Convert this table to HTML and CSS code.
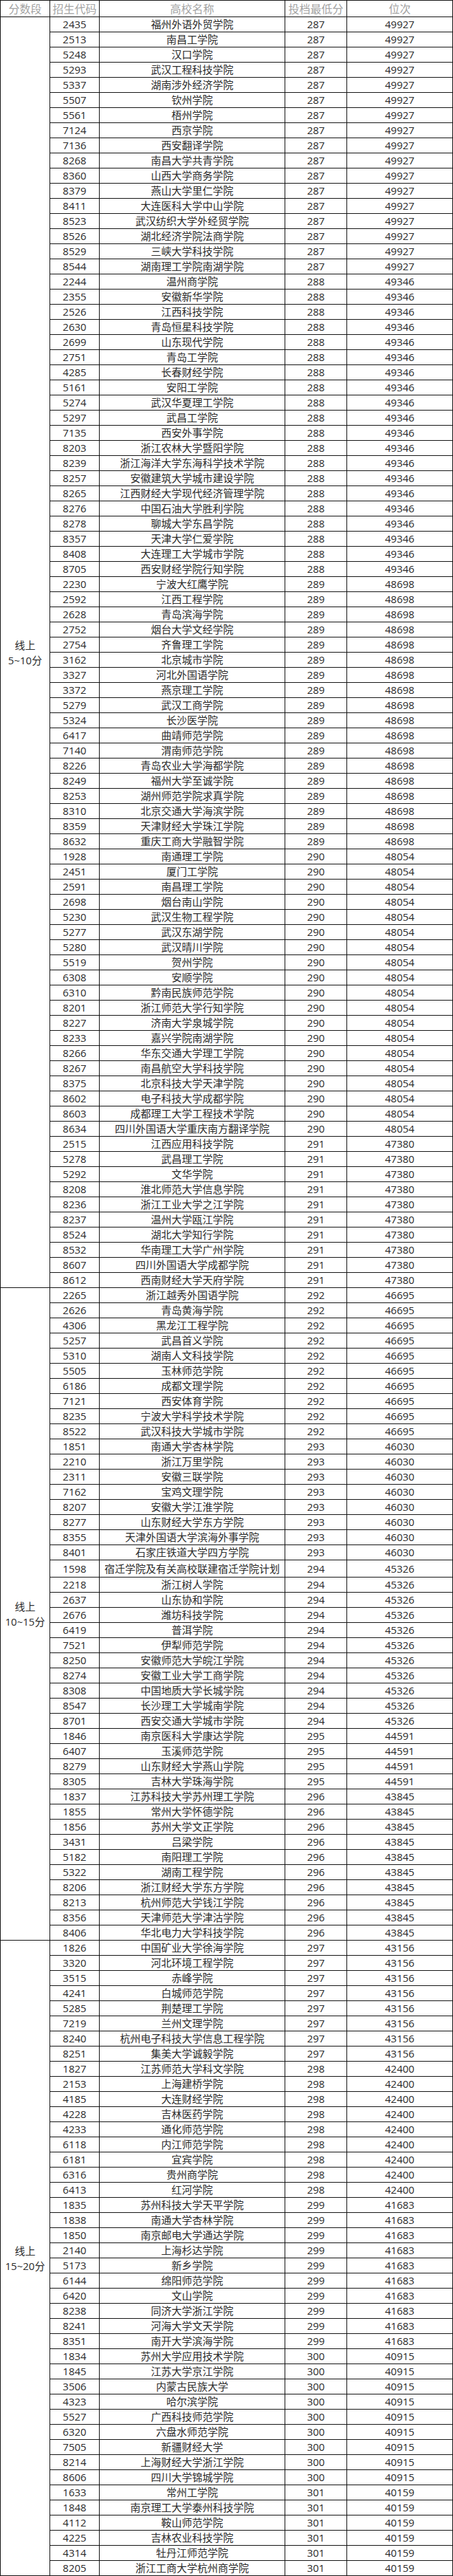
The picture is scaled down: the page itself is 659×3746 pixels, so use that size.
FILE: index.html
```html
<!DOCTYPE html>
<html lang="zh-CN">
<head>
<meta charset="utf-8">
<title>投档线</title>
<link rel="stylesheet" href="styles.css">
</head>
<body>
<div class="tbl">
  <div class="head">
    <div class="hc">分数段</div><div class="hc">招生代码</div><div class="hc">高校名称</div><div class="hc">投档最低分</div><div class="hc">位次</div>
  </div>

  <div class="group">
    <div class="label">线上<br>5~10分</div>
    <div class="rows">
      <div class="row"><span>2435</span><span>福州外语外贸学院</span><span>287</span><span>49927</span></div>
      <div class="row"><span>2513</span><span>南昌工学院</span><span>287</span><span>49927</span></div>
      <div class="row"><span>5248</span><span>汉口学院</span><span>287</span><span>49927</span></div>
      <div class="row"><span>5293</span><span>武汉工程科技学院</span><span>287</span><span>49927</span></div>
      <div class="row"><span>5337</span><span>湖南涉外经济学院</span><span>287</span><span>49927</span></div>
      <div class="row"><span>5507</span><span>钦州学院</span><span>287</span><span>49927</span></div>
      <div class="row"><span>5561</span><span>梧州学院</span><span>287</span><span>49927</span></div>
      <div class="row"><span>7124</span><span>西京学院</span><span>287</span><span>49927</span></div>
      <div class="row"><span>7136</span><span>西安翻译学院</span><span>287</span><span>49927</span></div>
      <div class="row"><span>8268</span><span>南昌大学共青学院</span><span>287</span><span>49927</span></div>
      <div class="row"><span>8360</span><span>山西大学商务学院</span><span>287</span><span>49927</span></div>
      <div class="row"><span>8379</span><span>燕山大学里仁学院</span><span>287</span><span>49927</span></div>
      <div class="row"><span>8411</span><span>大连医科大学中山学院</span><span>287</span><span>49927</span></div>
      <div class="row"><span>8523</span><span>武汉纺织大学外经贸学院</span><span>287</span><span>49927</span></div>
      <div class="row"><span>8526</span><span>湖北经济学院法商学院</span><span>287</span><span>49927</span></div>
      <div class="row"><span>8529</span><span>三峡大学科技学院</span><span>287</span><span>49927</span></div>
      <div class="row"><span>8544</span><span>湖南理工学院南湖学院</span><span>287</span><span>49927</span></div>
      <div class="row"><span>2244</span><span>温州商学院</span><span>288</span><span>49346</span></div>
      <div class="row"><span>2355</span><span>安徽新华学院</span><span>288</span><span>49346</span></div>
      <div class="row"><span>2526</span><span>江西科技学院</span><span>288</span><span>49346</span></div>
      <div class="row"><span>2630</span><span>青岛恒星科技学院</span><span>288</span><span>49346</span></div>
      <div class="row"><span>2699</span><span>山东现代学院</span><span>288</span><span>49346</span></div>
      <div class="row"><span>2751</span><span>青岛工学院</span><span>288</span><span>49346</span></div>
      <div class="row"><span>4285</span><span>长春财经学院</span><span>288</span><span>49346</span></div>
      <div class="row"><span>5161</span><span>安阳工学院</span><span>288</span><span>49346</span></div>
      <div class="row"><span>5274</span><span>武汉华夏理工学院</span><span>288</span><span>49346</span></div>
      <div class="row"><span>5297</span><span>武昌工学院</span><span>288</span><span>49346</span></div>
      <div class="row"><span>7135</span><span>西安外事学院</span><span>288</span><span>49346</span></div>
      <div class="row"><span>8203</span><span>浙江农林大学暨阳学院</span><span>288</span><span>49346</span></div>
      <div class="row"><span>8239</span><span>浙江海洋大学东海科学技术学院</span><span>288</span><span>49346</span></div>
      <div class="row"><span>8257</span><span>安徽建筑大学城市建设学院</span><span>288</span><span>49346</span></div>
      <div class="row"><span>8265</span><span>江西财经大学现代经济管理学院</span><span>288</span><span>49346</span></div>
      <div class="row"><span>8276</span><span>中国石油大学胜利学院</span><span>288</span><span>49346</span></div>
      <div class="row"><span>8278</span><span>聊城大学东昌学院</span><span>288</span><span>49346</span></div>
      <div class="row"><span>8357</span><span>天津大学仁爱学院</span><span>288</span><span>49346</span></div>
      <div class="row"><span>8408</span><span>大连理工大学城市学院</span><span>288</span><span>49346</span></div>
      <div class="row"><span>8705</span><span>西安财经学院行知学院</span><span>288</span><span>49346</span></div>
      <div class="row"><span>2230</span><span>宁波大红鹰学院</span><span>289</span><span>48698</span></div>
      <div class="row"><span>2592</span><span>江西工程学院</span><span>289</span><span>48698</span></div>
      <div class="row"><span>2628</span><span>青岛滨海学院</span><span>289</span><span>48698</span></div>
      <div class="row"><span>2752</span><span>烟台大学文经学院</span><span>289</span><span>48698</span></div>
      <div class="row"><span>2754</span><span>齐鲁理工学院</span><span>289</span><span>48698</span></div>
      <div class="row"><span>3162</span><span>北京城市学院</span><span>289</span><span>48698</span></div>
      <div class="row"><span>3327</span><span>河北外国语学院</span><span>289</span><span>48698</span></div>
      <div class="row"><span>3372</span><span>燕京理工学院</span><span>289</span><span>48698</span></div>
      <div class="row"><span>5279</span><span>武汉工商学院</span><span>289</span><span>48698</span></div>
      <div class="row"><span>5324</span><span>长沙医学院</span><span>289</span><span>48698</span></div>
      <div class="row"><span>6417</span><span>曲靖师范学院</span><span>289</span><span>48698</span></div>
      <div class="row"><span>7140</span><span>渭南师范学院</span><span>289</span><span>48698</span></div>
      <div class="row"><span>8226</span><span>青岛农业大学海都学院</span><span>289</span><span>48698</span></div>
      <div class="row"><span>8249</span><span>福州大学至诚学院</span><span>289</span><span>48698</span></div>
      <div class="row"><span>8253</span><span>湖州师范学院求真学院</span><span>289</span><span>48698</span></div>
      <div class="row"><span>8310</span><span>北京交通大学海滨学院</span><span>289</span><span>48698</span></div>
      <div class="row"><span>8359</span><span>天津财经大学珠江学院</span><span>289</span><span>48698</span></div>
      <div class="row"><span>8632</span><span>重庆工商大学融智学院</span><span>289</span><span>48698</span></div>
      <div class="row"><span>1928</span><span>南通理工学院</span><span>290</span><span>48054</span></div>
      <div class="row"><span>2451</span><span>厦门工学院</span><span>290</span><span>48054</span></div>
      <div class="row"><span>2591</span><span>南昌理工学院</span><span>290</span><span>48054</span></div>
      <div class="row"><span>2698</span><span>烟台南山学院</span><span>290</span><span>48054</span></div>
      <div class="row"><span>5230</span><span>武汉生物工程学院</span><span>290</span><span>48054</span></div>
      <div class="row"><span>5277</span><span>武汉东湖学院</span><span>290</span><span>48054</span></div>
      <div class="row"><span>5280</span><span>武汉晴川学院</span><span>290</span><span>48054</span></div>
      <div class="row"><span>5519</span><span>贺州学院</span><span>290</span><span>48054</span></div>
      <div class="row"><span>6308</span><span>安顺学院</span><span>290</span><span>48054</span></div>
      <div class="row"><span>6310</span><span>黔南民族师范学院</span><span>290</span><span>48054</span></div>
      <div class="row"><span>8201</span><span>浙江师范大学行知学院</span><span>290</span><span>48054</span></div>
      <div class="row"><span>8227</span><span>济南大学泉城学院</span><span>290</span><span>48054</span></div>
      <div class="row"><span>8233</span><span>嘉兴学院南湖学院</span><span>290</span><span>48054</span></div>
      <div class="row"><span>8266</span><span>华东交通大学理工学院</span><span>290</span><span>48054</span></div>
      <div class="row"><span>8267</span><span>南昌航空大学科技学院</span><span>290</span><span>48054</span></div>
      <div class="row"><span>8375</span><span>北京科技大学天津学院</span><span>290</span><span>48054</span></div>
      <div class="row"><span>8602</span><span>电子科技大学成都学院</span><span>290</span><span>48054</span></div>
      <div class="row"><span>8603</span><span>成都理工大学工程技术学院</span><span>290</span><span>48054</span></div>
      <div class="row"><span>8634</span><span>四川外国语大学重庆南方翻译学院</span><span>290</span><span>48054</span></div>
      <div class="row"><span>2515</span><span>江西应用科技学院</span><span>291</span><span>47380</span></div>
      <div class="row"><span>5278</span><span>武昌理工学院</span><span>291</span><span>47380</span></div>
      <div class="row"><span>5292</span><span>文华学院</span><span>291</span><span>47380</span></div>
      <div class="row"><span>8208</span><span>淮北师范大学信息学院</span><span>291</span><span>47380</span></div>
      <div class="row"><span>8236</span><span>浙江工业大学之江学院</span><span>291</span><span>47380</span></div>
      <div class="row"><span>8237</span><span>温州大学瓯江学院</span><span>291</span><span>47380</span></div>
      <div class="row"><span>8524</span><span>湖北大学知行学院</span><span>291</span><span>47380</span></div>
      <div class="row"><span>8532</span><span>华南理工大学广州学院</span><span>291</span><span>47380</span></div>
      <div class="row"><span>8607</span><span>四川外国语大学成都学院</span><span>291</span><span>47380</span></div>
      <div class="row"><span>8612</span><span>西南财经大学天府学院</span><span>291</span><span>47380</span></div>
    </div>
  </div>

  <div class="group">
    <div class="label">线上<br>10~15分</div>
    <div class="rows">
      <div class="row"><span>2265</span><span>浙江越秀外国语学院</span><span>292</span><span>46695</span></div>
      <div class="row"><span>2626</span><span>青岛黄海学院</span><span>292</span><span>46695</span></div>
      <div class="row"><span>4306</span><span>黑龙江工程学院</span><span>292</span><span>46695</span></div>
      <div class="row"><span>5257</span><span>武昌首义学院</span><span>292</span><span>46695</span></div>
      <div class="row"><span>5310</span><span>湖南人文科技学院</span><span>292</span><span>46695</span></div>
      <div class="row"><span>5505</span><span>玉林师范学院</span><span>292</span><span>46695</span></div>
      <div class="row"><span>6186</span><span>成都文理学院</span><span>292</span><span>46695</span></div>
      <div class="row"><span>7121</span><span>西安体育学院</span><span>292</span><span>46695</span></div>
      <div class="row"><span>8235</span><span>宁波大学科学技术学院</span><span>292</span><span>46695</span></div>
      <div class="row"><span>8522</span><span>武汉科技大学城市学院</span><span>292</span><span>46695</span></div>
      <div class="row"><span>1851</span><span>南通大学杏林学院</span><span>293</span><span>46030</span></div>
      <div class="row"><span>2210</span><span>浙江万里学院</span><span>293</span><span>46030</span></div>
      <div class="row"><span>2311</span><span>安徽三联学院</span><span>293</span><span>46030</span></div>
      <div class="row"><span>7162</span><span>宝鸡文理学院</span><span>293</span><span>46030</span></div>
      <div class="row"><span>8207</span><span>安徽大学江淮学院</span><span>293</span><span>46030</span></div>
      <div class="row"><span>8277</span><span>山东财经大学东方学院</span><span>293</span><span>46030</span></div>
      <div class="row"><span>8355</span><span>天津外国语大学滨海外事学院</span><span>293</span><span>46030</span></div>
      <div class="row"><span>8401</span><span>石家庄铁道大学四方学院</span><span>293</span><span>46030</span></div>
      <div class="row tall"><span>1598</span><span>宿迁学院及有关高校联建宿迁学院计划</span><span>294</span><span>45326</span></div>
      <div class="row"><span>2218</span><span>浙江树人学院</span><span>294</span><span>45326</span></div>
      <div class="row"><span>2637</span><span>山东协和学院</span><span>294</span><span>45326</span></div>
      <div class="row"><span>2676</span><span>潍坊科技学院</span><span>294</span><span>45326</span></div>
      <div class="row"><span>6419</span><span>普洱学院</span><span>294</span><span>45326</span></div>
      <div class="row"><span>7521</span><span>伊犁师范学院</span><span>294</span><span>45326</span></div>
      <div class="row"><span>8250</span><span>安徽师范大学皖江学院</span><span>294</span><span>45326</span></div>
      <div class="row"><span>8274</span><span>安徽工业大学工商学院</span><span>294</span><span>45326</span></div>
      <div class="row"><span>8308</span><span>中国地质大学长城学院</span><span>294</span><span>45326</span></div>
      <div class="row"><span>8547</span><span>长沙理工大学城南学院</span><span>294</span><span>45326</span></div>
      <div class="row"><span>8701</span><span>西安交通大学城市学院</span><span>294</span><span>45326</span></div>
      <div class="row"><span>1846</span><span>南京医科大学康达学院</span><span>295</span><span>44591</span></div>
      <div class="row"><span>6407</span><span>玉溪师范学院</span><span>295</span><span>44591</span></div>
      <div class="row"><span>8279</span><span>山东财经大学燕山学院</span><span>295</span><span>44591</span></div>
      <div class="row"><span>8305</span><span>吉林大学珠海学院</span><span>295</span><span>44591</span></div>
      <div class="row"><span>1837</span><span>江苏科技大学苏州理工学院</span><span>296</span><span>43845</span></div>
      <div class="row"><span>1855</span><span>常州大学怀德学院</span><span>296</span><span>43845</span></div>
      <div class="row"><span>1856</span><span>苏州大学文正学院</span><span>296</span><span>43845</span></div>
      <div class="row"><span>3431</span><span>吕梁学院</span><span>296</span><span>43845</span></div>
      <div class="row"><span>5182</span><span>南阳理工学院</span><span>296</span><span>43845</span></div>
      <div class="row"><span>5322</span><span>湖南工程学院</span><span>296</span><span>43845</span></div>
      <div class="row"><span>8206</span><span>浙江财经大学东方学院</span><span>296</span><span>43845</span></div>
      <div class="row"><span>8213</span><span>杭州师范大学钱江学院</span><span>296</span><span>43845</span></div>
      <div class="row"><span>8356</span><span>天津师范大学津沽学院</span><span>296</span><span>43845</span></div>
      <div class="row"><span>8406</span><span>华北电力大学科技学院</span><span>296</span><span>43845</span></div>
    </div>
  </div>

  <div class="group">
    <div class="label">线上<br>15~20分</div>
    <div class="rows">
      <div class="row"><span>1826</span><span>中国矿业大学徐海学院</span><span>297</span><span>43156</span></div>
      <div class="row"><span>3320</span><span>河北环境工程学院</span><span>297</span><span>43156</span></div>
      <div class="row"><span>3515</span><span>赤峰学院</span><span>297</span><span>43156</span></div>
      <div class="row"><span>4241</span><span>白城师范学院</span><span>297</span><span>43156</span></div>
      <div class="row"><span>5285</span><span>荆楚理工学院</span><span>297</span><span>43156</span></div>
      <div class="row"><span>7219</span><span>兰州文理学院</span><span>297</span><span>43156</span></div>
      <div class="row"><span>8240</span><span>杭州电子科技大学信息工程学院</span><span>297</span><span>43156</span></div>
      <div class="row"><span>8251</span><span>集美大学诚毅学院</span><span>297</span><span>43156</span></div>
      <div class="row"><span>1827</span><span>江苏师范大学科文学院</span><span>298</span><span>42400</span></div>
      <div class="row"><span>2153</span><span>上海建桥学院</span><span>298</span><span>42400</span></div>
      <div class="row"><span>4185</span><span>大连财经学院</span><span>298</span><span>42400</span></div>
      <div class="row"><span>4228</span><span>吉林医药学院</span><span>298</span><span>42400</span></div>
      <div class="row"><span>4233</span><span>通化师范学院</span><span>298</span><span>42400</span></div>
      <div class="row"><span>6118</span><span>内江师范学院</span><span>298</span><span>42400</span></div>
      <div class="row"><span>6181</span><span>宜宾学院</span><span>298</span><span>42400</span></div>
      <div class="row"><span>6316</span><span>贵州商学院</span><span>298</span><span>42400</span></div>
      <div class="row"><span>6413</span><span>红河学院</span><span>298</span><span>42400</span></div>
      <div class="row"><span>1835</span><span>苏州科技大学天平学院</span><span>299</span><span>41683</span></div>
      <div class="row"><span>1838</span><span>南通大学杏林学院</span><span>299</span><span>41683</span></div>
      <div class="row"><span>1850</span><span>南京邮电大学通达学院</span><span>299</span><span>41683</span></div>
      <div class="row"><span>2140</span><span>上海杉达学院</span><span>299</span><span>41683</span></div>
      <div class="row"><span>5173</span><span>新乡学院</span><span>299</span><span>41683</span></div>
      <div class="row"><span>6144</span><span>绵阳师范学院</span><span>299</span><span>41683</span></div>
      <div class="row"><span>6420</span><span>文山学院</span><span>299</span><span>41683</span></div>
      <div class="row"><span>8238</span><span>同济大学浙江学院</span><span>299</span><span>41683</span></div>
      <div class="row"><span>8241</span><span>河海大学文天学院</span><span>299</span><span>41683</span></div>
      <div class="row"><span>8351</span><span>南开大学滨海学院</span><span>299</span><span>41683</span></div>
      <div class="row"><span>1834</span><span>苏州大学应用技术学院</span><span>300</span><span>40915</span></div>
      <div class="row"><span>1845</span><span>江苏大学京江学院</span><span>300</span><span>40915</span></div>
      <div class="row"><span>3506</span><span>内蒙古民族大学</span><span>300</span><span>40915</span></div>
      <div class="row"><span>4323</span><span>哈尔滨学院</span><span>300</span><span>40915</span></div>
      <div class="row"><span>5527</span><span>广西科技师范学院</span><span>300</span><span>40915</span></div>
      <div class="row"><span>6320</span><span>六盘水师范学院</span><span>300</span><span>40915</span></div>
      <div class="row"><span>7505</span><span>新疆财经大学</span><span>300</span><span>40915</span></div>
      <div class="row"><span>8214</span><span>上海财经大学浙江学院</span><span>300</span><span>40915</span></div>
      <div class="row"><span>8606</span><span>四川大学锦城学院</span><span>300</span><span>40915</span></div>
      <div class="row"><span>1633</span><span>常州工学院</span><span>301</span><span>40159</span></div>
      <div class="row"><span>1848</span><span>南京理工大学泰州科技学院</span><span>301</span><span>40159</span></div>
      <div class="row"><span>4112</span><span>鞍山师范学院</span><span>301</span><span>40159</span></div>
      <div class="row"><span>4225</span><span>吉林农业科技学院</span><span>301</span><span>40159</span></div>
      <div class="row"><span>4314</span><span>牡丹江师范学院</span><span>301</span><span>40159</span></div>
      <div class="row"><span>8205</span><span>浙江工商大学杭州商学院</span><span>301</span><span>40159</span></div>
    </div>
  </div>
</div>
</body>
</html>
```

FILE: styles.css
```css
* { box-sizing: border-box; }

body {
  margin: 0;
  background: #ffffff;
  font-family: "Open Sans", "Noto Sans CJK SC", sans-serif;
  font-size: 15px;
  color: #2a2a2a;
}

.tbl {
  width: 659px;
  border-left: 1px solid #111;
}

.head {
  display: grid;
  grid-template-columns: 72px 72px 270px 90px 154px;
  height: 25px;
  border-top: 1px solid #111;
  border-bottom: 1px solid #111;
}

.hc {
  display: flex;
  align-items: center;
  justify-content: center;
  border-right: 1px solid #111;
  color: #a3a3a3;
  font-size: 16px;
  line-height: 1;
  white-space: nowrap;
}

.group {
  display: grid;
  grid-template-columns: 72px 1fr;
  border-bottom: 1px solid #111;
}

.label {
  display: flex;
  align-items: center;
  justify-content: center;
  text-align: center;
  line-height: 22px;
  border-right: 1px solid #111;
}

.row {
  display: grid;
  grid-template-columns: 72px 270px 90px 154px;
  height: 22px;
  border-bottom: 1px solid #111;
}

.row:last-child {
  height: 21px;
  border-bottom: none;
}

.row.tall {
  height: 25px;
}

.row > span {
  display: flex;
  align-items: center;
  justify-content: center;
  border-right: 1px solid #111;
  white-space: nowrap;
  line-height: 1;
}
```
